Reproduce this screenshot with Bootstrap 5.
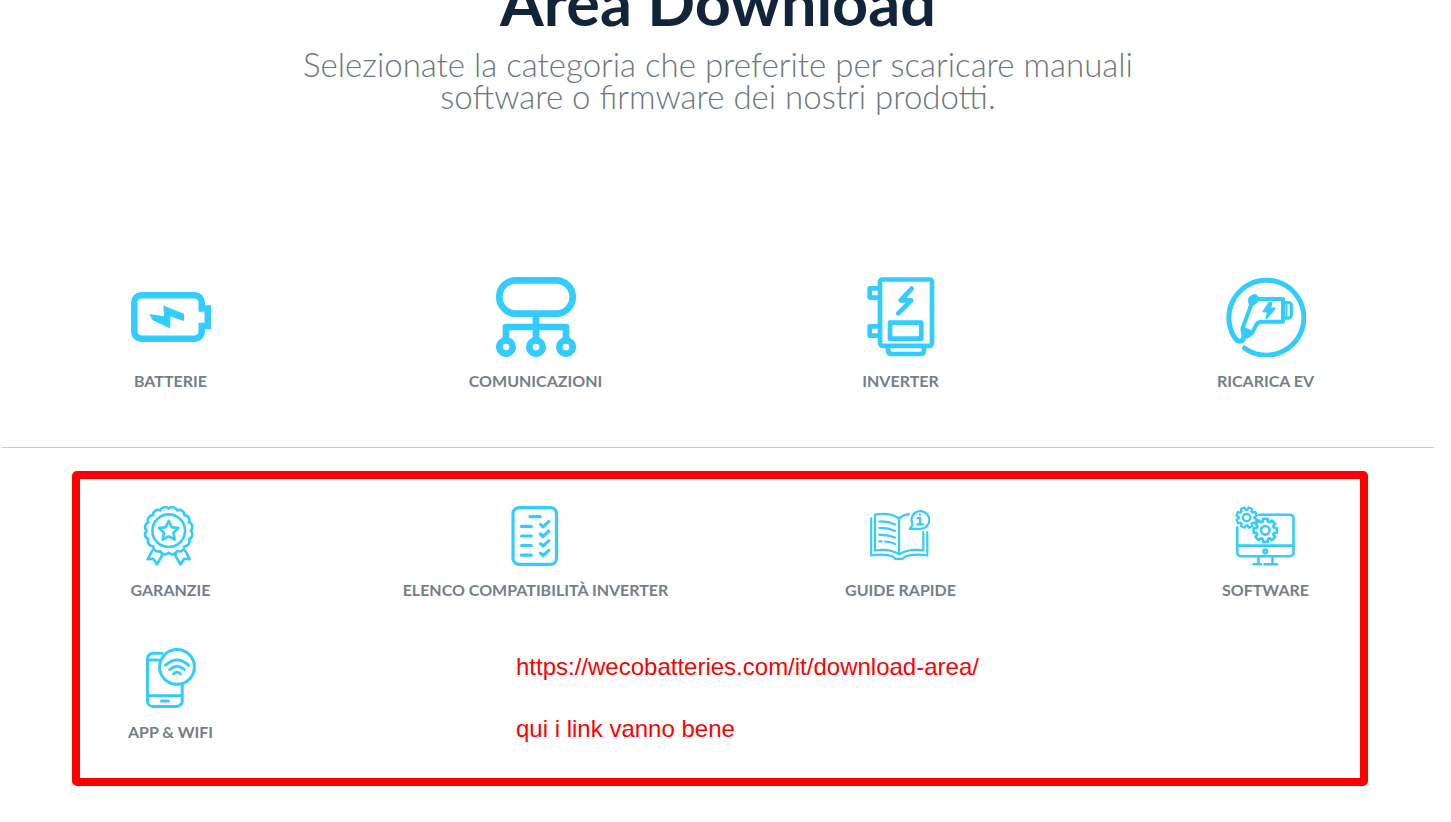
<!DOCTYPE html>
<html lang="it">
<head>
<meta charset="utf-8">
<meta name="viewport" content="width=device-width, initial-scale=1">
<title>Area Download</title>
<link href="https://cdn.jsdelivr.net/npm/bootstrap@5.3.0/dist/css/bootstrap.min.css" rel="stylesheet">
<style>
  body { font-family: "Century Gothic", Lato, sans-serif; background: #fff; color: #747f8a; }
  .page { padding-right: 15px; overflow-x: hidden; }
  .hero { position: relative; padding-top: 48px; }
  .hero h1 { position: absolute; inset: -36px 0 auto; font-size: 63px; line-height: 76px; font-weight: 700; color: #12243a; }
  .intro { font-size: 33px; line-height: 32px; font-weight: 300; color: #6b7680; max-width: 920px; }
  .main-cats { margin-top: 165px; }
  .tile { color: #747f8a; font-size: 16px; line-height: 20px; font-weight: 700; text-decoration: none; gap: 14px; }
  .tile svg { display: block; fill: none; stroke: #33ccff; stroke-linecap: round; stroke-linejoin: round; }
  .tile svg.square-ends { stroke-linecap: butt; stroke-linejoin: miter; }
  .tile .solid { fill: #33ccff; }
  .rule { height: 1px; margin: 56px 2px 0; background: #bfd3cf; }
  .extras { padding: 58px 0 80px; }
  .more-cats { row-gap: 48px; }
  .note { inset: 23px 68px auto 72px; height: 315px; border: 8px solid #f00; border-radius: 5px; pointer-events: none; }
  .note-text { margin: 173px 0 0 436px; font: 24px/30px "Liberation Sans", Arial, sans-serif; color: #f00; row-gap: 32px; }
</style>
</head>
<body>
<svg width="0" height="0" class="position-absolute" aria-hidden="true">
  <defs>
    <path id="tooth" d="M8.3-3.4 8.8-2.6 11.6-2.3V2.3L8.8 2.6 8.3 3.4"/>
    <g id="gear">
      <use href="#tooth"/><use href="#tooth" transform="rotate(45)"/><use href="#tooth" transform="rotate(90)"/><use href="#tooth" transform="rotate(135)"/>
      <use href="#tooth" transform="rotate(180)"/><use href="#tooth" transform="rotate(225)"/><use href="#tooth" transform="rotate(270)"/><use href="#tooth" transform="rotate(315)"/>
      <circle r="4.3"/>
    </g>
  </defs>
</svg>
<main class="page">
  <header class="hero text-center">
    <h1 class="mb-0">Area Download</h1>
    <p class="intro mx-auto mb-0">Selezionate la categoria che preferite per scaricare manuali software o firmware dei nostri prodotti.</p>
  </header>

  <section class="main-cats">
    <div class="row text-center">
      <div class="col-3"><a href="#batterie" class="tile d-inline-flex flex-column align-items-center">
        <svg class="square-ends" width="80" height="80" viewBox="0 0 80 80" stroke-width="6.5"><path d="M70.7 33V25.3a7 7 0 0 0-7-7H10.3a7 7 0 0 0-7 7V54.7a7 7 0 0 0 7 7H63.7a7 7 0 0 0 7-7V48.9H76.8V31.6H67.5M70.7 48.9H67.5"/><path class="solid" stroke="none" d="M18.3 37 33 39.2 32.3 28.6 53 36.7V44L39.3 39.5V51.4L21.7 43.3Z"/></svg>
        <span>BATTERIE</span></a></div>
      <div class="col-3"><a href="#comunicazioni" class="tile d-inline-flex flex-column align-items-center">
        <svg width="80" height="80" viewBox="0 0 80 80" stroke-width="6.7"><rect x="3.3" y="3.3" width="73.4" height="33.4" rx="16.7"/><path d="M40 38V62M10 61V50H70V61"/><circle cx="10" cy="70" r="6.7"/><circle cx="40" cy="70" r="6.7"/><circle cx="70" cy="70" r="6.7"/></svg>
        <span>COMUNICAZIONI</span></a></div>
      <div class="col-3"><a href="#inverter" class="tile d-inline-flex flex-column align-items-center">
        <svg width="80" height="80" viewBox="0 0 80 80" stroke-width="4.7"><rect x="19" y="2.5" width="52" height="66.3" rx="2.5"/><rect x="29" y="45.7" width="31.3" height="16"/><path d="M19 11.3H8.7V20.6H19M19 49.3H8.7V58.6H19M27 70v3q0 4 4 4H59q4 0 4-4V70M50.7 11.6 39.7 23.3H50.3L37.3 36.3"/><path class="solid" stroke-width="2" d="M46 18 40 24H50L44 29"/></svg>
        <span>INVERTER</span></a></div>
      <div class="col-3"><a href="#ricarica-ev" class="tile d-inline-flex flex-column align-items-center">
        <svg width="80" height="80" viewBox="0 0 80 80" stroke-width="4"><path stroke-width="5" d="M18.6 71.2A37.5 37.5 0 1 0 7.4 58.5Q12.5 67.5 17 62.5L18.5 58.5"/><path d="M31.5 21.9H57V44.7H36Q31.5 44.7 29.8 48.5L26.5 55.5 16.5 51.5 25.5 27 30 24M57 21.9V44.7"/><path class="solid" d="M24 23.5Q24 20.5 29 19L32 22 25 28ZM16.5 53 25 56.5 21.5 59.5 17.5 58.5Z"/><path stroke-width="3.2" d="M59 25.5H63.3L65.3 27.5V39.2L63.3 41.2H59"/><path stroke-width="2" d="M60.5 26V41"/><path class="solid" stroke-width="2" d="M43.5 25.5 37.5 34.5H42L40.5 41 48.5 31.5H44L45.5 25.7Z"/></svg>
        <span>RICARICA EV</span></a></div>
    </div>
  </section>

  <div class="rule"></div>

  <section class="extras position-relative">
    <div class="row more-cats text-center">
      <div class="col-3"><a href="#garanzie" class="tile d-inline-flex flex-column align-items-center">
        <svg width="60" height="60" viewBox="0 0 60 60" stroke-width="2.6"><g transform="translate(28.7 24.7)"><path d="M22 0A5 5 0 0 1 20.3 8.4A5 5 0 0 1 15.6 15.6A5 5 0 0 1 8.4 20.3A5 5 0 0 1 0 22A5 5 0 0 1-8.4 20.3A5 5 0 0 1-15.6 15.6A5 5 0 0 1-20.3 8.4A5 5 0 0 1-22 0A5 5 0 0 1-20.3-8.4A5 5 0 0 1-15.6-15.6A5 5 0 0 1-8.4-20.3A5 5 0 0 1 0-22A5 5 0 0 1 8.4-20.3A5 5 0 0 1 15.6-15.6A5 5 0 0 1 20.3-8.4A5 5 0 0 1 22 0Z"/><circle r="16.3"/><path d="M0-9.8 3-3.6 9.7-2.7 4.8 2 6 8.8 0 5.6-6 8.8-4.8 2-9.7-2.7-3-3.6Z"/></g><path d="M12.3 44.5 7.7 53.3 13.3 52.8 17 58.5 22.8 48M45.1 44.5 49.7 53.3 44.1 52.8 40.4 58.5 34.6 48"/></svg>
        <span>GARANZIE</span></a></div>
      <div class="col-3"><a href="#compatibilita" class="tile d-inline-flex flex-column align-items-center">
        <svg width="60" height="60" viewBox="0 0 60 60" stroke-width="3.2"><rect x="8" y="1.6" width="43.5" height="56.8" rx="6"/><path d="M25 10.7H35.2M16.5 20.4H26.3M16.5 30H26.3M16.5 39.5H26.3M16.5 49.2H26.3M35.5 18.4 38 20.9 43.8 15.5M35.5 28 38 30.5 43.8 25M35.5 37.6 38 40.1 43.8 34.6M35.5 47.2 38 49.7 43.8 44.3"/></svg>
        <span>ELENCO COMPATIBILITÀ INVERTER</span></a></div>
      <div class="col-3"><a href="#guide" class="tile d-inline-flex flex-column align-items-center">
        <svg width="60" height="60" viewBox="0 0 60 60" stroke-width="2.2"><path d="M1.2 12.3V49.5Q14 47.5 22.5 50.2L25.5 52.9H32.5L35.5 50.2Q44 47.5 57.3 49.5V26M5 8.6Q20 6 29 12.4Q33 9 39 8.2M5 8.6V44.4Q20 42.2 29 48.4Q38 42.2 53.3 44.4V26M29 12.4V48.4M9.3 15.5Q18 15 25 18.4M9.3 22Q18 21.5 25 24.9M9.3 28.9Q18 28.4 25 31.5M9.3 35.4H11.5M15 35.5Q21 35.8 25 38"/><path d="M42.3 17.5A8.9 8.9 0 1 1 49.5 22.8H39.8L42.3 19.5Z"/><path d="M47.7 12.2H50.1V18M47.3 18.4H53M50 8.4V8.6"/></svg>
        <span>GUIDE RAPIDE</span></a></div>
      <div class="col-3"><a href="#software" class="tile d-inline-flex flex-column align-items-center">
        <svg width="60" height="60" viewBox="0 0 60 60" stroke-width="2.6"><path d="M24 8.7H55a3.5 3.5 0 0 1 3.5 3.5V46.7a3.5 3.5 0 0 1-3.5 3.5H5.7a3.5 3.5 0 0 1-3.5-3.5V21.5M2.2 39.6H58.5M23.5 52V58M37.5 52V58M18.5 58.3H26M29.5 58.3H42"/><circle cx="30.3" cy="45.4" r="1.8"/><use href="#gear" transform="translate(11.6 11.6) rotate(22) scale(.87)"/><use href="#gear" transform="translate(30.3 24.3)"/></svg>
        <span>SOFTWARE</span></a></div>
      <div class="col-3"><a href="#app-wifi" class="tile d-inline-flex flex-column align-items-center">
        <svg width="60" height="60" viewBox="0 0 60 60" stroke-width="3"><path d="M21 5.3H12a5.5 5.5 0 0 0-5.5 5.5V52.9a5.5 5.5 0 0 0 5.5 5.5H35.7a5.5 5.5 0 0 0 5.5-5.5V37M6.5 12H17.5M6.5 47.8H41.2M20.5 52.9H27.5"/><circle cx="36" cy="18.9" r="17.4"/><path d="M24.5 17.2Q36 6.8 47.5 17.2M28.7 21.5Q36 15 43.3 21.5M32.6 25.8Q36 22.8 39.4 25.8"/></svg>
        <span>APP &amp; WIFI</span></a></div>
    </div>
    <div class="note position-absolute">
      <div class="note-text d-flex flex-column text-start">
        <span>https://wecobatteries.com/it/download-area/</span>
        <span>qui i link vanno bene</span>
      </div>
    </div>
  </section>
</main>
<script src="https://cdn.jsdelivr.net/npm/bootstrap@5.3.0/dist/js/bootstrap.bundle.min.js"></script>
</body>
</html>
